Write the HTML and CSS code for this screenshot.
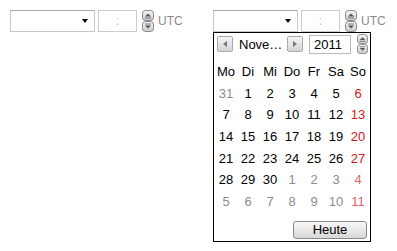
FILE: index.html
```html
<!DOCTYPE html>
<html lang="de">
<head>
  <meta charset="UTF-8">
  <title>Datum und Zeit</title>
  <link rel="stylesheet" href="styles.css">
</head>
<body>
  <div class="page">
    <div class="picker">
      <div class="row">
        <div class="select"><span class="caret"></span></div>
        <div class="time">:</div>
        <svg class="spin" width="12" height="22" viewBox="0 0 12 22">
          <defs>
            <linearGradient id="sg1" x1="0" y1="0" x2="0" y2="1">
              <stop offset="0" stop-color="#f8f8f8"/><stop offset="1" stop-color="#c8c8c8"/>
            </linearGradient>
          </defs>
          <rect x="0.5" y="0.5" width="11" height="10" rx="3" fill="url(#sg1)" stroke="#888"/>
          <path d="M3 6.5 L6 3.5 L9 6.5 Z" fill="#555"/>
          <path d="M3 8 H9" stroke="#777"/>
          <rect x="0.5" y="11.5" width="11" height="10" rx="3" fill="url(#sg1)" stroke="#888"/>
          <path d="M3 14 H9" stroke="#777"/>
          <path d="M3 15.5 L9 15.5 L6 18.5 Z" fill="#555"/>
        </svg>
        <span class="tz">UTC</span>
      </div>
    </div>

    <div class="picker">
      <div class="row">
        <div class="select"><span class="caret"></span></div>
        <div class="time">:</div>
        <svg class="spin" width="12" height="22" viewBox="0 0 12 22">
          <rect x="0.5" y="0.5" width="11" height="10" rx="3" fill="url(#sg1)" stroke="#888"/>
          <path d="M3 6.5 L6 3.5 L9 6.5 Z" fill="#555"/>
          <path d="M3 8 H9" stroke="#777"/>
          <rect x="0.5" y="11.5" width="11" height="10" rx="3" fill="url(#sg1)" stroke="#888"/>
          <path d="M3 14 H9" stroke="#777"/>
          <path d="M3 15.5 L9 15.5 L6 18.5 Z" fill="#555"/>
        </svg>
        <span class="tz">UTC</span>
      </div>

      <div class="calendar">
        <div class="cal-head">
          <div class="nav prev"><span></span></div>
          <div class="month">Nove…</div>
          <div class="nav next"><span></span></div>
          <div class="year">2011</div>
          <svg class="spin small" width="11" height="20" viewBox="0 0 12 22">
            <rect x="0.5" y="0.5" width="11" height="10" rx="3" fill="url(#sg1)" stroke="#888"/>
            <path d="M3 6.5 L6 3.5 L9 6.5 Z" fill="#555"/>
            <path d="M3 8 H9" stroke="#777"/>
            <rect x="0.5" y="11.5" width="11" height="10" rx="3" fill="url(#sg1)" stroke="#888"/>
            <path d="M3 14 H9" stroke="#777"/>
            <path d="M3 15.5 L9 15.5 L6 18.5 Z" fill="#555"/>
          </svg>
        </div>
        <div class="days" id="days"></div>
        <div class="cal-foot"><div class="today">Heute</div></div>
      </div>
    </div>
  </div>

  <script>
    const names = ['Mo', 'Di', 'Mi', 'Do', 'Fr', 'Sa', 'So'];
    const cells = [];
    names.forEach(n => cells.push(`<span class="wd">${n}</span>`));
    // 31. Oktober, dann November, dann Dezember
    const list = [{ d: 31, other: true }];
    for (let d = 1; d <= 30; d++) list.push({ d });
    for (let d = 1; d <= 11; d++) list.push({ d, other: true });
    list.forEach((item, i) => {
      let cls = 'day';
      if (item.other) cls += ' other';
      if (i % 7 === 6) cls += ' sun';
      cells.push(`<span class="${cls}">${item.d}</span>`);
    });
    document.getElementById('days').innerHTML = cells.join('');
  </script>
</body>
</html>
```

FILE: styles.css
```css
* { box-sizing: border-box; margin: 0; padding: 0; }
body { font-family: "Liberation Sans", Arial, sans-serif; font-size: 13px; background: #fff; color: #000; }
.page { display: flex; align-items: flex-start; padding: 9px 0 0 10px; }
.picker { flex: none; width: 203px; display: flex; flex-direction: column; }
.row { display: flex; align-items: center; height: 23px; }
.select { position: relative; width: 85px; height: 22px; background: #fff; border: 1px solid #c8c8c8; border-top-color: #a8a8a8; }
.caret { position: absolute; right: 6px; top: 8px; border-top: 4px solid #000; border-left: 3.5px solid transparent; border-right: 3.5px solid transparent; }
.time { width: 39px; height: 22px; margin-left: 3px; border: 1px solid #ccc; background: #fff; color: #bbb; text-align: center; line-height: 20px; font-size: 12px; }
.spin { display: block; flex: none; margin-left: 5px; }
.tz { margin-left: 4px; font-size: 12px; color: #8a8a8a; }

.calendar { width: 158px; background: #fff; border: 1px solid #000; padding: 1px 1px 2px 1px; }
.cal-head { display: flex; align-items: center; height: 20px; padding-left: 2px; }
.nav { flex: none; width: 16px; height: 16px; border: 1px solid #aaa; border-radius: 2px; background: linear-gradient(#f6f6f6, #d4d4d4); display: flex; align-items: center; justify-content: center; }
.nav span { width: 0; height: 0; border-top: 3.5px solid transparent; border-bottom: 3.5px solid transparent; }
.prev span { border-right: 4px solid #777; }
.next span { border-left: 4px solid #777; }
.month { flex: none; width: 46px; margin-left: 6px; white-space: nowrap; }
.next { margin-left: 2px; }
.year { flex: none; width: 42px; height: 19px; margin-left: 6px; border: 1px solid #bbb; padding-left: 4px; line-height: 17px; }
.spin.small { margin-left: 6px; }

.days { display: grid; grid-template-columns: repeat(7, 22px); grid-auto-rows: 21.6px; margin-top: 7px; }
.days span { display: flex; align-items: center; justify-content: center; }
.days .sun { color: #d01818; }
.days .other { color: #8c8c8c; }
.days .other.sun { color: #e06464; }

.cal-foot { display: flex; justify-content: flex-end; margin-top: 9px; padding-right: 2px; }
.today { width: 74px; height: 18px; border: 1px solid #8a8a8a; border-radius: 3px; background: linear-gradient(#f8f8f8, #d8d8d8); text-align: center; line-height: 16px; }
```
